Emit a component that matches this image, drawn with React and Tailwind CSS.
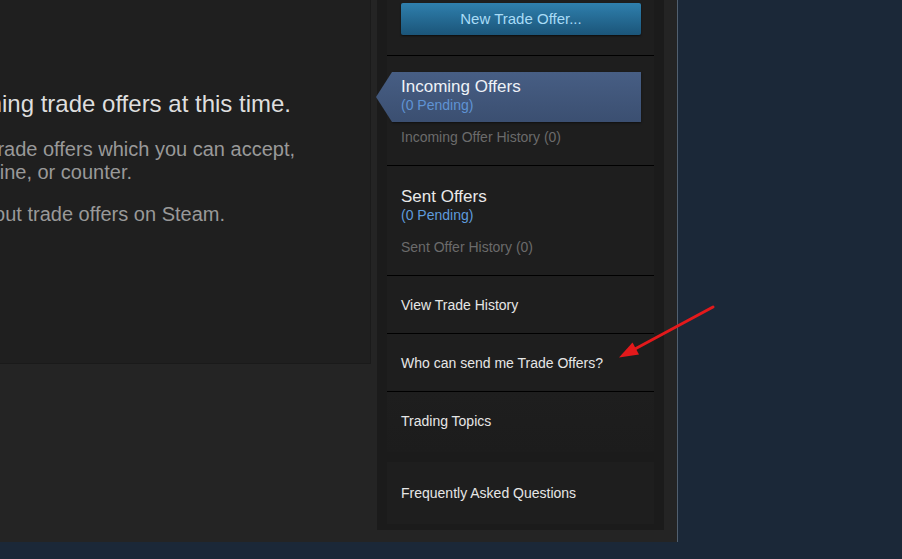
import React from 'react'

const font = { fontFamily: '"Liberation Sans", Arial, sans-serif' }

function Line({ right, className, children }) {
  // lines of the cropped left column are anchored by their right edge
  return (
    <div className={`flex justify-end ${right} ${className}`}>
      <span className="whitespace-nowrap">{children}</span>
    </div>
  )
}

function ActiveOffer() {
  return (
    <div className="relative ml-[5px] h-[50px] w-[249px] bg-gradient-to-b from-[#475e84] to-[#3b4f71] pl-[9px] pt-[5px] shadow-[0_1px_2px_rgba(0,0,0,0.5)]">
      <svg className="absolute left-[-16px] top-0" width="16" height="50" viewBox="0 0 16 50">
        <defs>
          <linearGradient id="ag" x1="0" y1="0" x2="0" y2="1">
            <stop offset="0" stopColor="#475e84" />
            <stop offset="1" stopColor="#3b4f71" />
          </linearGradient>
        </defs>
        <polygon points="16,0 0,25 16,50" fill="url(#ag)" />
      </svg>
      <div className="text-[17px] leading-[20px] text-[#eef2f7]">Incoming Offers</div>
      <div className="text-[14px] leading-[16px] text-[#5f93d4]">(0 Pending)</div>
    </div>
  )
}

function LinkRow({ label }) {
  return (
    <div className="flex h-[58px] items-center border-b border-black pl-[14px]">
      <span className="text-[14px] leading-[16px] text-[#e6e6e6]">{label}</span>
    </div>
  )
}

export default function App() {
  return (
    <div className="relative h-[559px] w-[902px] overflow-hidden bg-[#1b2838]" style={font}>
      <div className="flex h-[542px] w-[678px] border-r border-[#52606f] bg-[#242424]">
        {/* cropped content panel */}
        <div className="h-[364px] w-[371px] overflow-hidden border-b border-r border-[#1a1a1a] bg-[#1f1f1f] pt-[90px]">
          <Line right="w-[291px]" className="text-[24px] leading-[28px] text-[#dedede]">
            There are no incoming trade offers at this time.
          </Line>
          <div className="mt-[20px] text-[20px] leading-[23px] text-[#999999]">
            <Line right="w-[295px]">Incoming offers are trade offers which you can accept,</Line>
            <Line right="w-[132px]">decline, or counter.</Line>
            <Line right="w-[225px]" className="mt-[19px]">Learn more about trade offers on Steam.</Line>
          </div>
        </div>

        {/* right sidebar */}
        <div className="ml-[6px] h-[530px] w-[287px] bg-[#1b1b1b] px-[10px]">
          <div className="flex h-[56px] flex-col border-b border-black bg-[#1e1e1e] pt-[3px]">
            <button className="ml-[14px] h-[32px] w-[240px] rounded-[2px] bg-gradient-to-b from-[#2f80ae] to-[#1b5579] text-[15px] text-[#a9dcf7] shadow-[0_1px_2px_rgba(0,0,0,0.6)]">
              New Trade Offer...
            </button>
          </div>

          <div className="h-[110px] border-b border-black bg-[#1e1e1e] pt-[16px]">
            <ActiveOffer />
            <div className="mt-[7px] pl-[14px] text-[14px] leading-[16px] text-[#6b6b6b]">Incoming Offer History (0)</div>
          </div>

          <div className="h-[110px] border-b border-black bg-[#1e1e1e] pl-[14px] pt-[21px]">
            <div className="text-[17px] leading-[20px] text-[#e9e9e9]">Sent Offers</div>
            <div className="text-[14px] leading-[16px] text-[#5f9bdc]">(0 Pending)</div>
            <div className="mt-[16px] text-[14px] leading-[16px] text-[#6b6b6b]">Sent Offer History (0)</div>
          </div>

          <div className="bg-[#1e1e1e]">
            <LinkRow label="View Trade History" />
            <LinkRow label="Who can send me Trade Offers?" />
          </div>

          <div className="h-[60px] bg-gradient-to-b from-[#1e1e1e] to-[#1c1c1c] pl-[14px] pt-[17px]">
            <span className="text-[14px] leading-[16px] text-[#e6e6e6]">Trading Topics</span>
          </div>

          <div className="mt-[10px] flex h-[62px] items-center bg-[#1e1e1e] pl-[14px]">
            <span className="text-[14px] leading-[16px] text-[#e6e6e6]">Frequently Asked Questions</span>
          </div>
        </div>
      </div>

      {/* red annotation arrow */}
      <svg className="pointer-events-none absolute left-0 top-0" width="902" height="559">
        <line x1="713" y1="307" x2="634" y2="349.5" stroke="#e3191b" strokeWidth="3" strokeLinecap="round" />
        <polygon points="619,357.5 632.5,342.5 639,354.5" fill="#e3191b" />
      </svg>
    </div>
  )
}
